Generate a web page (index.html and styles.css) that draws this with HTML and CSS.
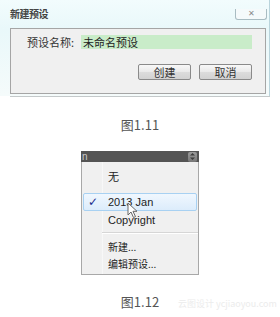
FILE: index.html
```html
<!DOCTYPE html>
<html lang="zh-CN">
<head>
	<meta charset="UTF-8">
	<title>预设</title>
	<link rel="stylesheet" href="styles.css">
</head>
<body>
	<div class="dialog">
		<div class="titlebar">
			<span class="title">新建预设</span>
			<span class="close">&#x2715;</span>
		</div>
		<div class="panel">
			<div class="field">
				<span class="label">预设名称:</span>
				<span class="input">未命名预设</span>
			</div>
			<div class="buttons">
				<span class="btn">创建</span><span class="btn">取消</span>
			</div>
		</div>
	</div>
	<div class="rule"></div>
	<p class="caption cap1">图1.11</p>

	<div class="menu-wrap">
		<div class="bar">
			<span>n</span>
			<span class="spin">
				<svg width="7" height="9" viewBox="0 0 7 9"><path d="M3.5 1 L6 3.5 L1 3.5 Z M3.5 8 L6 5.5 L1 5.5 Z" fill="#3c3c3c"/></svg>
			</span>
		</div>
		<ul class="menu">
			<li class="item">无</li>
			<li class="item on"><span class="check">&#x2713;</span>2013 Jan</li>
			<li class="item">Copyright</li>
			<li class="sep"></li>
			<li class="item small">新建...</li>
			<li class="item small">编辑预设...</li>
		</ul>
		<svg class="cursor" width="12" height="17" viewBox="0 0 12 17"><path d="M1 1 L1 13 L4 10 L6.5 15.5 L8.5 14.6 L6 9.3 L10 9.3 Z" fill="#fff" stroke="#666" stroke-width="1"/></svg>
	</div>
	<p class="caption cap2">图1.12<span class="mark">云图设计 ycjiaoyou.com</span></p>
</body>
</html>
```

FILE: styles.css
```css
body{margin:0;background:#fff;font-family:"Liberation Sans","Noto Sans CJK SC",sans-serif;color:#222;}

.dialog{width:269px;height:96px;border-right:1px solid #b9d4dc;background:linear-gradient(180deg,#f2fcfd 0%,#e9f8fa 30%,#f5fbfb 100%);}
.titlebar{height:28px;position:relative;display:flex;align-items:center;}
.title{margin-left:10px;margin-top:-1px;font-size:10px;font-weight:bold;color:#444;letter-spacing:-0.5px;}
.close{position:absolute;left:235px;top:9px;width:30px;height:10px;border:1px solid #a9bcc2;border-top:none;border-radius:0 0 3px 3px;background:#f5fafb;font-size:8px;line-height:10px;text-align:center;color:#8a8a8a;}

.panel{margin-left:10px;width:254px;height:64px;border:1px solid #a5a5a5;background:#f0f0f0;font-family:"Noto Sans CJK SC",sans-serif;}
.field{display:flex;align-items:center;margin-top:6px;height:14px;}
.label{width:63px;text-align:right;font-size:11px;color:#333;}
.input{margin-left:7px;width:169px;height:14px;padding-left:2px;background:#c9ecc9;font-size:11px;line-height:14px;color:#222;}
.buttons{display:flex;justify-content:flex-end;gap:8px;margin-top:15px;padding-right:13px;}
.btn{width:51px;height:14px;border:1px solid #8a8a8a;border-radius:2px;background:linear-gradient(180deg,#f8f8f8 0%,#e9e9e9 50%,#dcdcdc 51%,#d2d2d2 100%);font-size:11px;line-height:14px;text-align:center;color:#333;}

.rule{margin-left:10px;width:260px;height:1px;background:#c4c9ca;}
.caption{margin:0;text-align:center;font-family:"Noto Sans CJK SC",sans-serif;font-size:13px;color:#555;}
.cap1{padding-top:19px;height:35px;line-height:18px;}

.menu-wrap{position:relative;margin-left:81px;width:118px;}
.bar{height:11px;background:#545454;display:flex;justify-content:space-between;align-items:center;font-size:10px;color:#ccc;padding-left:1px;}
.spin{display:flex;align-items:center;justify-content:center;width:9px;height:10px;margin-right:2px;background:linear-gradient(180deg,#9a9a9a,#777);border-radius:2px;}
.menu{list-style:none;margin:0;padding:6px 0 2px;border:1px solid #a8a8a8;border-top:none;background:linear-gradient(90deg,#f0f0f0 0,#f0f0f0 19px,#e2e3e3 19px,#ffffff 20px,#f0f0f0 21px);font-size:11px;}
.item{height:18px;line-height:18px;padding-left:26px;position:relative;}
.item.small{height:17px;line-height:17px;font-family:"Noto Sans CJK SC",sans-serif;font-size:10px;}
.item.on{margin:7px 1px 0;padding-left:24px;height:16px;line-height:16px;border:1px solid #a8d1f2;border-radius:2px;background:linear-gradient(180deg,#f0f7fe,#dcecfb);}
.check{position:absolute;left:4px;top:0;font-family:"DejaVu Sans",sans-serif;font-size:12px;font-weight:bold;color:#1a2a8a;}
.sep{height:1px;margin:3px 0 4px 20px;background:#d6d6d6;border-bottom:1px solid #fff;}
.cursor{position:absolute;left:46px;top:51px;}

.cap2{position:relative;margin-top:18px;line-height:18px;}
.mark{position:absolute;left:178px;top:2px;font-size:9px;color:#ececec;}
```
